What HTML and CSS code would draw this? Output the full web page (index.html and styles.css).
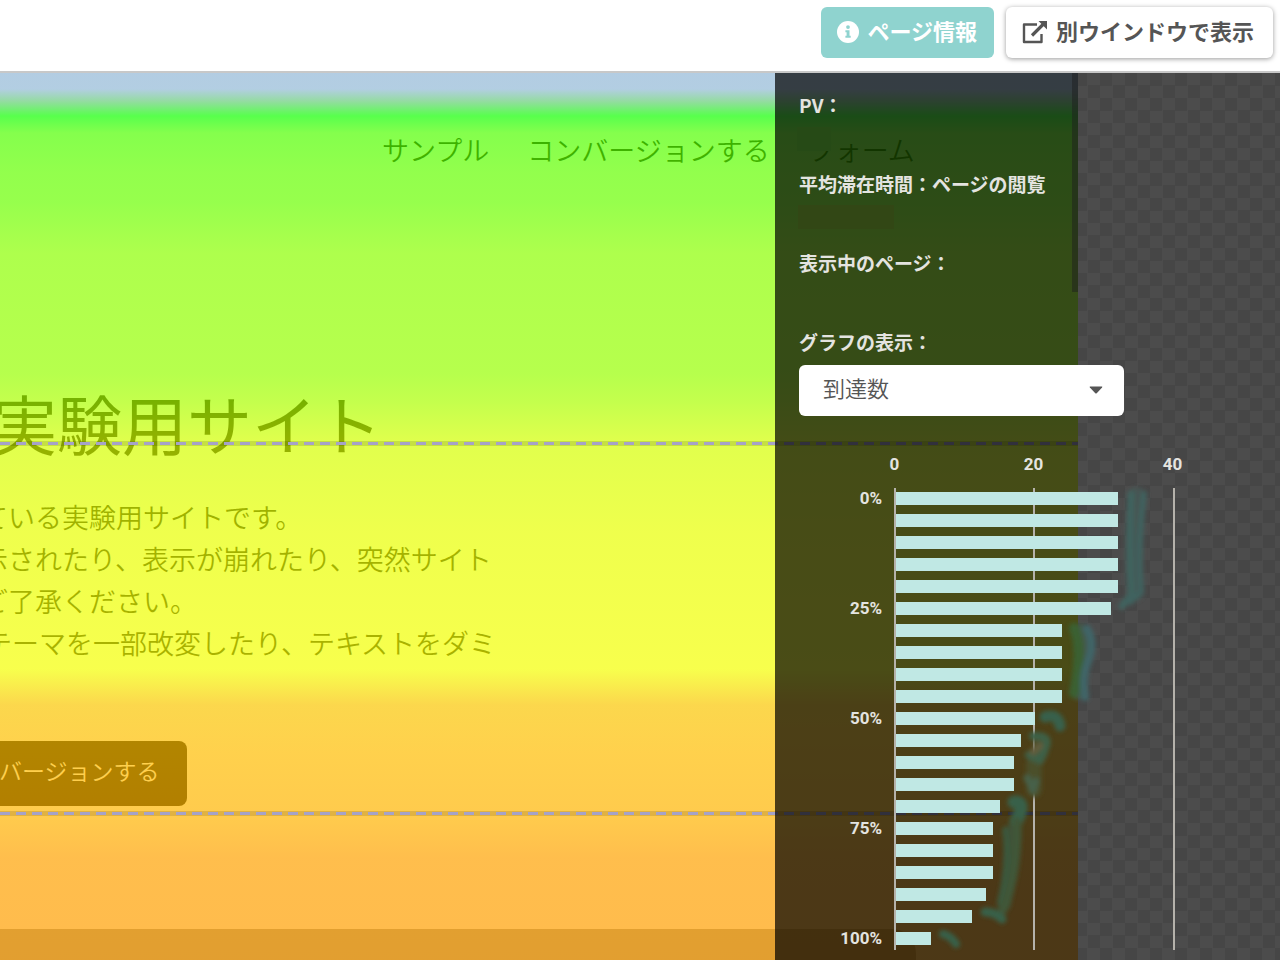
FILE: index.html
```html
<!DOCTYPE html>
<html lang="ja">
<head>
<meta charset="utf-8">
<meta name="viewport" content="width=device-width, initial-scale=1">
<title>ヒートマップ</title>
<link rel="stylesheet" href="styles.css">
</head>
<body>
<header class="toolbar">
  <button type="button" class="btn btn-info">
    <svg class="icon-info" viewBox="0 0 22 22" aria-hidden="true"><circle cx="11" cy="11" r="11" fill="#fff"/><circle cx="11" cy="6.1" r="1.9" fill="#8fd3cf"/><path d="M8.4 9.2h4.1v5.5h1.2v2H8.4v-2h1.2v-3.5H8.4z" fill="#8fd3cf"/></svg>
    <span>ページ情報</span>
  </button>
  <button type="button" class="btn btn-window">
    <svg class="icon-window" viewBox="0 0 26 24" aria-hidden="true"><path d="M15 4.500H2V22H19.500V14" fill="none" stroke="#555" stroke-width="2.400" stroke-linejoin="round"/><path d="M10 15.500L22 3.500" stroke="#555" stroke-width="3.200"/><path d="M16.500 1H25V9.500Z" fill="#555"/></svg>
    <span>別ウインドウで表示</span>
  </button>
</header>

<main class="stage">
  <section class="preview">
    <nav class="site-nav">
      <a href="#sample">サンプル</a>
      <a href="#conversion">コンバージョンする</a>
      <a href="#form">フォーム</a>
    </nav>
    <h1 class="site-title">実験用サイト</h1>
    <div class="site-copy">
      <p>ている実験用サイトです。</p>
      <p>示されたり、表示が崩れたり、突然サイト</p>
      <p>ご了承ください。</p>
      <p class="copy-inset">テーマを一部改変したり、テキストをダミ</p>
    </div>
    <button type="button" class="site-cta">コンバージョンする</button>
    <div class="site-footer"></div>
    <div class="heat"></div>
    <div class="fold fold-first"></div>
    <div class="fold fold-second"></div>
    <div class="scroll-thumb"></div>
  </section>

  <aside class="panel">
    <dl class="facts">
      <div class="fact"><dt>PV：</dt><dd class="mask mask-green"></dd></div>
      <div class="fact"><dt>平均滞在時間：ページの閲覧</dt><dd class="mask mask-brown"></dd></div>
      <div class="fact"><dt>表示中のページ：</dt><dd></dd></div>
    </dl>
    <label class="field-label" for="graph">グラフの表示：</label>
    <div class="select-box">
      <select id="graph"><option>到達数</option></select>
      <svg class="caret" viewBox="0 0 14 8" aria-hidden="true"><path d="M1.200 .5H12.800Q13.800 .5 13.100 1.400L7.700 7.200Q7 7.900 6.300 7.200L.9 1.400Q.2 .5 1.200 .5Z" fill="#555"/></svg>
    </div>

    <div class="chart">
      <div class="ticks"><span>0</span><span>20</span><span>40</span></div>
      <div class="chart-body">
        <div class="percents"><span>0%</span><span>25%</span><span>50%</span><span>75%</span><span>100%</span></div>
        <div class="plot">
          <div class="bar" style="width:80%"></div>
          <div class="bar" style="width:80%"></div>
          <div class="bar" style="width:80%"></div>
          <div class="bar" style="width:80%"></div>
          <div class="bar" style="width:80%"></div>
          <div class="bar" style="width:77.5%"></div>
          <div class="bar" style="width:60%"></div>
          <div class="bar" style="width:60%"></div>
          <div class="bar" style="width:60%"></div>
          <div class="bar" style="width:60%"></div>
          <div class="bar" style="width:50%"></div>
          <div class="bar" style="width:45%"></div>
          <div class="bar" style="width:42.5%"></div>
          <div class="bar" style="width:42.5%"></div>
          <div class="bar" style="width:37.5%"></div>
          <div class="bar" style="width:35%"></div>
          <div class="bar" style="width:35%"></div>
          <div class="bar" style="width:35%"></div>
          <div class="bar" style="width:32.5%"></div>
          <div class="bar" style="width:27.5%"></div>
          <div class="bar" style="width:12.5%"></div>
          <svg class="smears" viewBox="0 0 280 462" aria-hidden="true">
            <defs><filter id="soft" x="-20%" y="-20%" width="140%" height="140%"><feGaussianBlur stdDeviation="2"/></filter></defs>
            <g filter="url(#soft)" fill="none" stroke-linecap="round" stroke-linejoin="round">
              <path d="M243 8Q238 55 241 104" stroke="#465452" stroke-width="18"/>
              <path d="M237 6Q235 60 238 106L228 118" stroke="#40635f" stroke-width="7"/>
              <path d="M250 6Q243 60 247 104L236 114" stroke="#41625f" stroke-width="6"/>
              <path d="M188 142Q195 160 184 205" stroke="#45584c" stroke-width="13"/>
              <path d="M180 140Q189 160 180 205" stroke="#3a6130" stroke-width="10"/>
              <path d="M193 141Q202 155 193 176Q188 190 191 209" stroke="#406568" stroke-width="8"/>
              <path d="M151 229Q164 225 166 238" stroke="#39614c" stroke-width="11"/>
              <path d="M147 252L147 264L140 276L140 302" stroke="#4b502c" stroke-width="15"/>
              <path d="M139 248Q156 247 152 258L146 272L135 267" stroke="#3c6047" stroke-width="8"/>
              <path d="M139 264L146 258" stroke="#625d3d" stroke-width="7"/>
              <path d="M133 290L139 302L142 293" stroke="#476149" stroke-width="7"/>
              <path d="M120 314Q130 313 126 325L122 334" stroke="#39604a" stroke-width="13"/>
              <path d="M116 344Q118 380 110 416" stroke="#415036" stroke-width="14"/>
              <path d="M111 342Q117 377 106 414" stroke="#3b583d" stroke-width="6"/>
              <path d="M123 334Q124 385 109 422" stroke="#415638" stroke-width="9"/>
              <path d="M91 424Q101 424 108 431" stroke="#39604a" stroke-width="9"/>
              <path d="M49 446Q57 448 62 456" stroke="#39604a" stroke-width="8"/>
            </g>
          </svg>
        </div>
      </div>
    </div>
  </aside>
</main>
</body>
</html>
```
FILE: styles.css
```css
* { box-sizing: border-box; }

body {
  margin: 0;
  height: 100vh;
  display: flex;
  flex-direction: column;
  overflow: hidden;
  font-family: "Noto Sans CJK JP", sans-serif;
  background: #fff;
}

p, h1, dl, dd { margin: 0; }

.toolbar {
  display: flex;
  justify-content: flex-end;
  gap: 12px;
  padding: 7px 7px 13px;
  border-bottom: 2px solid #c8c8c8;
}

.btn {
  display: flex;
  align-items: center;
  gap: 8px;
  height: 51px;
  padding: 0 16px 6px;
  border: 0;
  border-radius: 6px;
  font: 700 22px/32px "Noto Sans CJK JP", sans-serif;
}

.btn svg { position: relative; top: 2px; }
.btn-info { padding-right: 17px; background: #8fd3cf; color: #fff; }
.btn-window { padding-right: 19px; background: #fff; color: #555; box-shadow: 0 1px 5px rgba(0, 0, 0, .4); }
.icon-info { width: 22px; height: 22px; }
.icon-window { width: 26px; height: 24px; }

.stage {
  flex: 1;
  min-height: 0;
  position: relative;
  background: repeating-conic-gradient(#fff 0 25%, #ebebeb 0 50%) 0 0 / 25px 25px;
}

.preview {
  position: relative;
  display: flex;
  flex-direction: column;
  align-items: flex-start;
  height: 100%;
  margin-right: 202px;
  padding-top: 56px;
  overflow: hidden;
  background: #fff;
  color: #000;
  font-weight: 350;
  white-space: nowrap;
}

.site-nav {
  display: flex;
  gap: 38px;
  padding-left: 382px;
  font-size: 27px;
  line-height: 42px;
}

.site-nav a { color: inherit; text-decoration: none; }

.site-title {
  margin: 211px 0 34px -8px;
  font-size: 65px;
  line-height: 80px;
  font-weight: 400;
}

.site-copy {
  margin-left: -19px;
  font-size: 27px;
  line-height: 42px;
}

.copy-inset { padding-left: 4px; }

.site-cta {
  height: 65px;
  margin: 77px 0 0 -73px;
  padding: 0 27px 8px 26px;
  border: 0;
  border-radius: 8px;
  background: #000;
  color: #fff;
  font: 350 23px/34px "Noto Sans CJK JP", sans-serif;
}

.site-footer {
  width: 85%;
  height: 31px;
  margin-top: auto;
  border-radius: 0 24px 0 0;
  background: #a0a0a0;
}

.heat {
  position: absolute;
  inset: 0;
  opacity: .7;
  background: linear-gradient(
    #92b7d6 0, #92b9d6 16px, #67cc7b 28px, #10ff00 43px, #50ff00 60px,
    #64ff00 100px, #6aff00 130px, #8bff00 180px, #97ff00 300px,
    #aaff00 328px, #d4ff00 370px, #e8ff00 460px, #f4ff00 596px,
    #fac600 632px, #ffbd00 680px, #ffb400 745px, #ffa200 785px, #ff9e00 888px);
}

.fold {
  position: absolute;
  left: 0;
  right: 0;
  height: 5px;
  background:
    repeating-linear-gradient(90deg, #a5a2c8 0 10px, transparent 10px 16px) 0 1px / 100% 3px no-repeat,
    rgba(0, 0, 0, .12);
}

.fold-first { top: 368px; }
.fold-second { top: 738px; }

.scroll-thumb {
  position: absolute;
  top: 0;
  right: 0;
  width: 6px;
  height: 219px;
  background: rgba(100, 100, 100, .5);
}

.panel {
  position: absolute;
  top: 0;
  right: 0;
  bottom: 0;
  width: 505px;
  padding: 18px 24px 0;
  overflow: hidden;
  background: rgba(0, 0, 0, .7);
  color: #e4e4e0;
}

.fact { height: 79px; }

.fact dt, .field-label {
  display: block;
  font-size: 19px;
  line-height: 28px;
  font-weight: 700;
}

.mask { height: 24px; }
.mask-green { width: 34px; margin: 8px 0 0 -2px; background: #264a16; }
.mask-brown { width: 96px; margin: 7px 0 0 -1px; background: #324715; }

.select-box {
  position: relative;
  width: 325px;
  margin-top: 9px;
}

.select-box select {
  appearance: none;
  display: block;
  width: 100%;
  height: 51px;
  padding: 0 40px 8px 24px;
  border: 0;
  border-radius: 6px;
  background: #fff;
  color: #555;
  font: 350 22px/32px "Noto Sans CJK JP", sans-serif;
}

.caret {
  position: absolute;
  top: 21px;
  right: 21px;
  width: 14px;
  height: 8px;
  pointer-events: none;
}

.chart {
  margin-top: 36px;
  font: 700 17px/24px Roboto, sans-serif;
}

.ticks {
  display: grid;
  grid-template-columns: repeat(3, 139px);
  margin-left: 26px;
  text-align: center;
}

.chart-body {
  display: flex;
  gap: 12px;
  margin-top: 12px;
}

.percents {
  width: 83px;
  display: flex;
  flex-direction: column;
  gap: 86px;
  margin-top: -2px;
  text-align: right;
}

.plot {
  position: relative;
  display: flex;
  flex-direction: column;
  gap: 9px;
  width: 281px;
  height: 462px;
  padding: 4px 2px 0;
  background:
    linear-gradient(#b5b2ab, #b5b2ab) 0 0 / 2px 100% no-repeat,
    linear-gradient(#b5b2ab, #b5b2ab) 139px 0 / 2px 100% no-repeat,
    linear-gradient(#b5b2ab, #b5b2ab) 100% 0 / 2px 100% no-repeat;
}

.bar { height: 13px; flex: none; background: #c0e8e4; }

.smears {
  position: absolute;
  left: 0;
  top: 0;
  width: 280px;
  height: 462px;
  overflow: visible;
}
```
